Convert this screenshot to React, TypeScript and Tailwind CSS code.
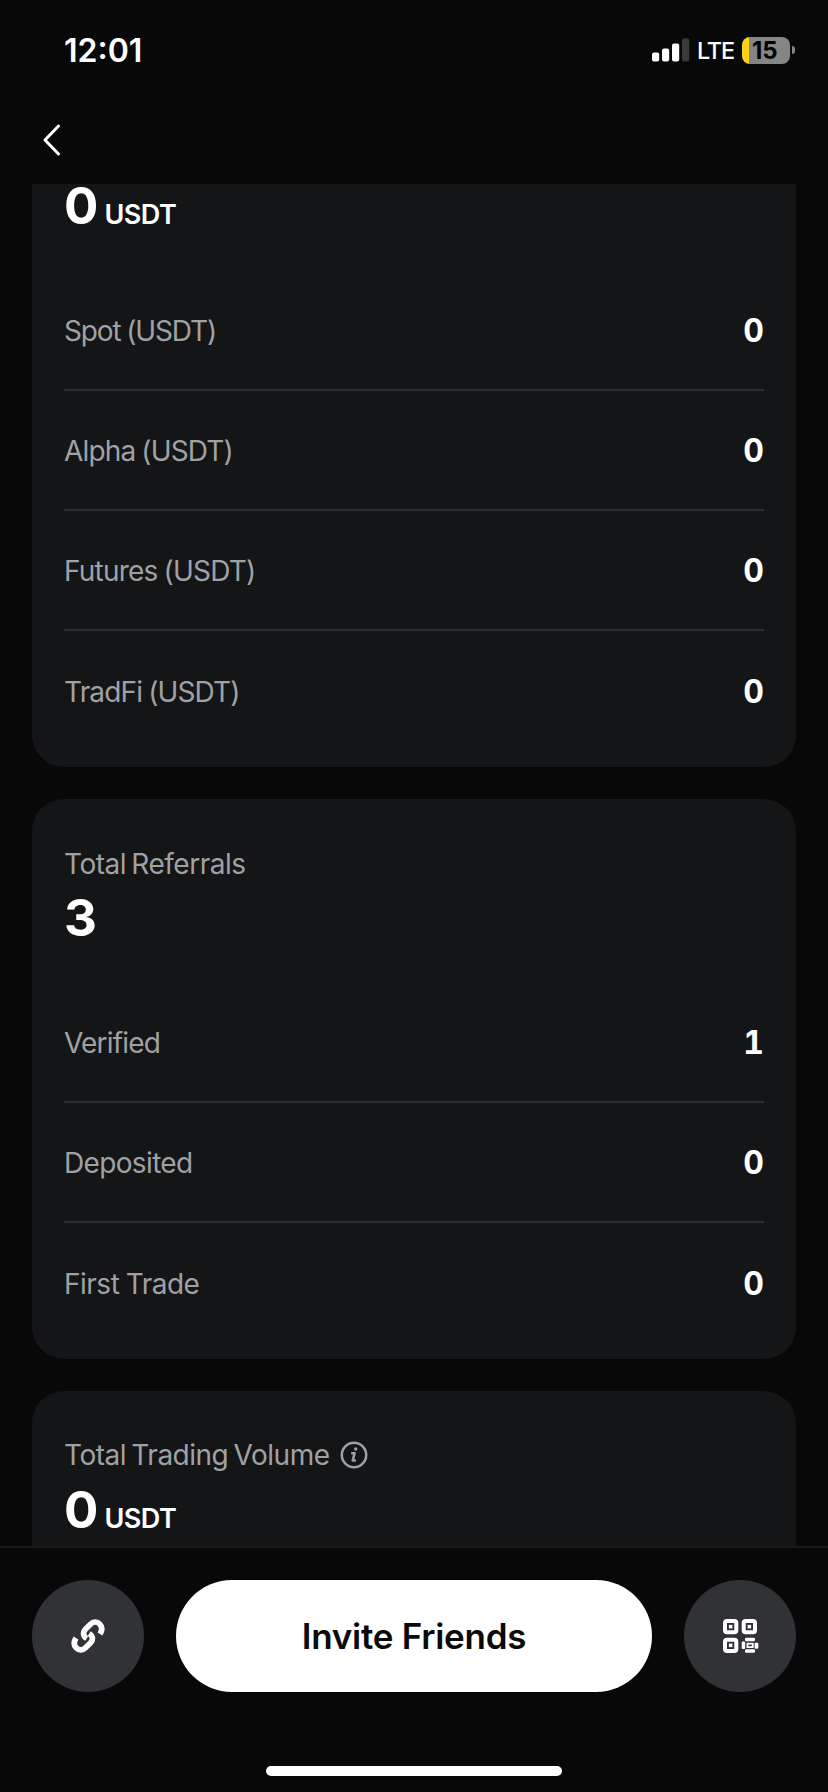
import React from 'react';

type Stat = { label: string; value: string; labelClass: string };

const commission: Stat[] = [
    { label: 'Spot (USDT)', value: '0', labelClass: 'tracking-[-1.15px]' },
    { label: 'Alpha (USDT)', value: '0', labelClass: 'tracking-[-0.85px]' },
    { label: 'Futures (USDT)', value: '0', labelClass: 'tracking-[-0.8px]' },
    { label: 'TradFi (USDT)', value: '0', labelClass: 'tracking-[-0.85px]' },
];

const referrals: Stat[] = [
    { label: 'Verified', value: '1', labelClass: 'tracking-[-0.8px]' },
    { label: 'Deposited', value: '0', labelClass: 'tracking-[-0.65px]' },
    { label: 'First Trade', value: '0', labelClass: 'tracking-[-0.5px]' },
];

function StatusBar() {
    return (
        <div className="flex h-[100px] items-center justify-between pl-16 pr-[33px]">
            <span className="pt-px text-[32px] font-semibold leading-none">12:01</span>
            <div className="flex items-center">
                <svg className="mr-[7px]" width="38" height="25" viewBox="0 0 38 25" fill="#fff">
                    <rect x="0" y="14.500" width="7.200" height="9" rx="2" />
                    <rect x="10" y="10.500" width="7.200" height="13" rx="2" />
                    <rect x="20" y="5.500" width="7.200" height="18" rx="2" />
                    <rect x="30" y="0.500" width="7.200" height="23" rx="2" fill="#3a3a3a" />
                </svg>
                <span className="mr-2 pt-px text-[23.500px] font-medium leading-8 tracking-[-1.2px]">LTE</span>
                <div className="flex items-center gap-0.5">
                    <div className="flex h-[27px] w-12 items-center rounded-lg bg-[linear-gradient(90deg,#fdd018_7px,#858585_7px)]">
                        <span className="pl-2.5 text-[24px] font-bold leading-[27px] text-black">15</span>
                    </div>
                    <div className="h-2 w-[3px] rounded-r-full bg-[#858585]" />
                </div>
            </div>
        </div>
    );
}

function StatRows({ rows }: { rows: Stat[] }) {
    return (
        <div>
            {rows.map((row) => (
                <div
                    key={row.label}
                    className="flex h-[120px] items-center justify-between border-b-2 border-[#2e2f33] pt-0.5 last:border-b-0"
                >
                    <span className={`text-[28px] text-[#a0a1a5] [word-spacing:-1px] ${row.labelClass}`}>{row.label}</span>
                    <span className="text-[32px] font-bold tabular-nums">{row.value}</span>
                </div>
            ))}
        </div>
    );
}

function Amount({ value, unit }: { value: string; unit?: string }) {
    return (
        <div className="flex h-[42px] items-baseline gap-1.5 leading-[44px]">
            <span className="text-[51px] font-bold">{value}</span>
            {unit && <span className="text-[27px] font-semibold tracking-[-0.5px]">{unit}</span>}
        </div>
    );
}

function InfoIcon() {
    return (
        <svg width="28" height="28" viewBox="0 0 28 28" fill="none" stroke="#a0a1a5">
            <circle cx="14" cy="14" r="12.200" strokeWidth="2.500" />
            <path d="M12.200 12.200h2.400l-1.900 7.400h2.200" strokeWidth="2.500" strokeLinecap="round" strokeLinejoin="round" />
            <circle cx="15.700" cy="8" r="1.700" fill="#a0a1a5" stroke="none" />
        </svg>
    );
}

function LinkIcon() {
    return (
        <svg width="34" height="34" viewBox="0 0 34 34" fill="none" stroke="#fff" strokeWidth="5.700">
            <path d="M15.800 19.400C12 17.200 11.600 13.100 14.400 10.300L19.500 5.200C22.200 2.500 26 2.300 28.600 4.900C31.200 7.500 31.400 11.200 29 15" />
            <path d="M18.200 14.600C22 16.800 22.400 20.900 19.600 23.700L14.500 28.800C11.800 31.500 8 31.700 5.400 29.100C2.800 26.500 2.600 22.800 5 19" />
        </svg>
    );
}

function QrIcon() {
    return (
        <svg className="ml-0.5" width="36" height="34" viewBox="0 0 36 34" fill="none" stroke="#fff" strokeWidth="4">
            <rect x="2" y="2" width="11.300" height="11.300" rx="2" />
            <rect x="20.700" y="2" width="11.300" height="11.300" rx="2" />
            <rect x="2" y="20.700" width="11.300" height="11.300" rx="2" />
            <g fill="#fff" stroke="none">
                <rect x="5.900" y="5.900" width="3.500" height="3.500" />
                <rect x="24.600" y="5.900" width="3.500" height="3.500" />
                <rect x="5.900" y="24.600" width="3.500" height="3.500" />
                <rect x="22" y="18.700" width="10" height="3.500" rx="1.200" />
                <rect x="18.700" y="22.500" width="3.500" height="7.500" rx="1.200" />
                <rect x="31.600" y="23.700" width="3.800" height="6" rx="1.200" />
                <rect x="22" y="30.300" width="10" height="3.500" rx="1.200" />
            </g>
            <rect x="24.400" y="24.700" width="5.400" height="3.400" strokeWidth="1.800" />
        </svg>
    );
}

export default function App() {
    return (
        <div className="flex h-[1792px] w-[828px] flex-col overflow-hidden bg-[#080808] font-['Inter','Liberation_Sans',sans-serif] text-white">
            <StatusBar />

            <header className="flex h-[84px] items-center pb-1 pl-[42px]">
                <button type="button" aria-label="Back">
                    <svg width="20" height="32" viewBox="0 0 20 32" fill="none" stroke="#fff" strokeWidth="3" strokeLinecap="round" strokeLinejoin="round">
                        <path d="M16.500 2L3 16L16.500 30" />
                    </svg>
                </button>
            </header>

            <main className="flex h-[1362px] flex-col gap-8 px-8">
                <section className="shrink-0 rounded-b-[32px] bg-[#141517] px-8 pb-4">
                    <div className="h-[87px]">
                        <Amount value="0" unit="USDT" />
                    </div>
                    <StatRows rows={commission} />
                </section>

                <section className="shrink-0 rounded-[32px] bg-[#141517] px-8 pb-4">
                    <div className="h-[184px] pt-[45px]">
                        <p className="text-[28px] leading-10 tracking-[-0.5px] text-[#a0a1a5] [word-spacing:-2px]">Total Referrals</p>
                        <div className="mt-3">
                            <Amount value="3" />
                        </div>
                    </div>
                    <StatRows rows={referrals} />
                </section>

                <section className="h-[155px] shrink-0 rounded-t-[32px] bg-[#141517] px-8 pt-11">
                    <div className="flex items-center gap-2.5 text-[28px] leading-10 tracking-[-0.5px] text-[#a0a1a5] [word-spacing:-2px]">
                        Total Trading Volume
                        <InfoIcon />
                    </div>
                    <div className="mt-[13px]">
                        <Amount value="0" unit="USDT" />
                    </div>
                </section>
            </main>

            <footer className="flex flex-1 flex-col items-center border-t-2 border-[#191a1c] pt-8">
                <div className="flex w-full gap-8 px-8">
                    <button type="button" aria-label="Copy link" className="flex size-28 items-center justify-center rounded-full bg-[#313235]">
                        <LinkIcon />
                    </button>
                    <button type="button" className="h-28 flex-1 rounded-full bg-white text-[35px] font-semibold tracking-[-0.25px] text-[#0a0a0a]">
                        Invite Friends
                    </button>
                    <button type="button" aria-label="QR code" className="flex size-28 items-center justify-center rounded-full bg-[#313235]">
                        <QrIcon />
                    </button>
                </div>
                <div className="mt-[74px] h-2.5 w-[296px] rounded-full bg-white" />
            </footer>
        </div>
    );
}
